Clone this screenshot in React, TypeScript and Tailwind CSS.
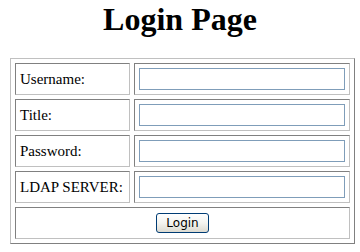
import React from "react";

const cellCls =
  "border border-solid border-t-[#808080] border-l-[#808080] border-r-[#c0c0c0] border-b-[#c0c0c0] p-[4px] align-middle";

function Row({ label }: { label: string }) {
  return (
    <tr>
      <td className={cellCls + " w-[115px] whitespace-nowrap"}>{label}</td>
      <td className={cellCls}>
        <input
          type="text"
          className="block h-[22px] w-[206px] border border-solid border-[#7f9db9] bg-white outline-none"
        />
      </td>
    </tr>
  );
}

export default function App() {
  return (
    <div
      className="w-[360px] h-[252px] bg-white text-black overflow-hidden"
      style={{ fontFamily: '"Liberation Serif", serif' }}
    >
      <h1 className="pt-[1px] text-center text-[32px] leading-[36px] font-bold">Login Page</h1>
      <table className="mt-[21px] ml-[10px] w-[345px] border-separate border-spacing-[4px] border border-solid border-t-[#c0c0c0] border-l-[#c0c0c0] border-r-[#808080] border-b-[#808080] text-[15px] leading-[17px]">
        <tbody>
          <Row label="Username:" />
          <Row label="Title:" />
          <Row label="Password:" />
          <Row label="LDAP SERVER:" />
          <tr>
            <td colSpan={2} className={cellCls + " text-center h-[32px]"}>
              <button
                type="button"
                className="inline-block align-middle h-[20px] w-[53px] rounded-[3px] border border-solid border-[#003c74] bg-gradient-to-b from-white via-[#f4f4f0] to-[#dcdad0] text-[12px] leading-[16px] text-black"
                style={{ fontFamily: '"DejaVu Sans", sans-serif' }}
              >
                Login
              </button>
            </td>
          </tr>
        </tbody>
      </table>
    </div>
  );
}
